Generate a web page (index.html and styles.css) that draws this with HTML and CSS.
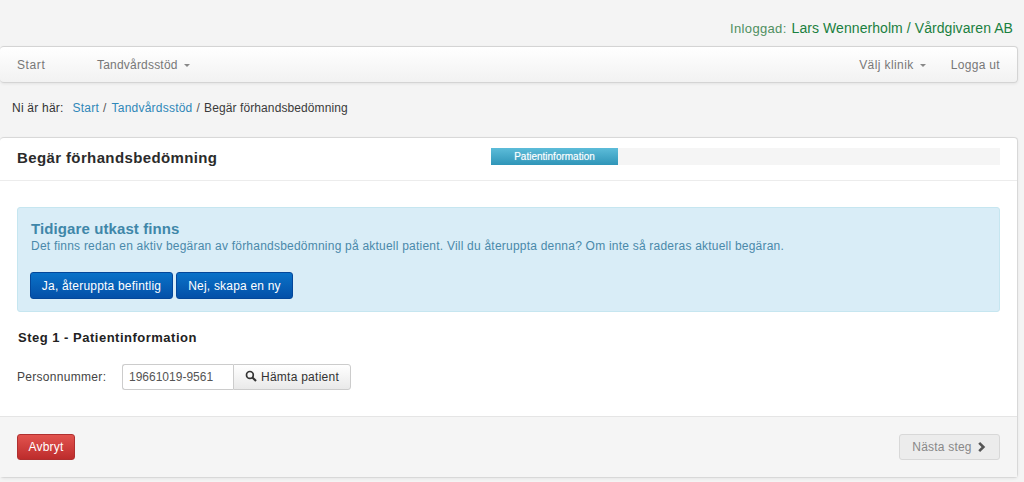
FILE: index.html
```html
<!DOCTYPE html>
<html lang="sv">
<head>
<meta charset="utf-8">
<title>Begär förhandsbedömning</title>
<link rel="stylesheet" href="styles.css">
</head>
<body>
<div class="page">
  <div class="user"><span class="user-label">Inloggad:</span> <span class="user-name">Lars Wennerholm / Vårdgivaren AB</span></div>
  <nav class="navbar">
    <div class="nav-group">
      <a class="nav-start">Start</a>
      <a class="nav-item">Tandvårdsstöd<span class="caret"></span></a>
    </div>
    <div class="nav-group">
      <a class="nav-clinic">Välj klinik<span class="caret"></span></a>
      <a class="nav-logout">Logga ut</a>
    </div>
  </nav>
  <div class="crumbs"><span class="crumb-label">Ni är här:</span><a>Start</a><span class="sep">/</span><a>Tandvårdsstöd</a><span class="sep">/</span><span class="crumb-current">Begär förhandsbedömning</span></div>
  <main class="card">
    <header class="card-head">
      <h1>Begär förhandsbedömning</h1>
      <div class="progress"><div class="progress-bar">Patientinformation</div></div>
    </header>
    <section class="card-body">
      <div class="alert">
        <h2>Tidigare utkast finns</h2>
        <p>Det finns redan en aktiv begäran av förhandsbedömning på aktuell patient. Vill du återuppta denna? Om inte så raderas aktuell begäran.</p>
        <div class="alert-actions">
          <button class="btn btn-blue btn-resume">Ja, återuppta befintlig</button>
          <button class="btn btn-blue btn-new">Nej, skapa en ny</button>
        </div>
      </div>
      <h3>Steg 1 - Patientinformation</h3>
      <div class="field">
        <label>Personnummer:</label>
        <div class="input-group">
          <span class="input">19661019-9561</span>
          <button class="btn-fetch">
            <svg class="icon-search" viewBox="0 0 12 12" width="12" height="12"><circle cx="4.9" cy="4.9" r="3.4" fill="none" stroke="#333" stroke-width="1.7"/><path d="M7.4 7.4 11 11" stroke="#333" stroke-width="2.1" fill="none"/></svg>Hämta patient
          </button>
        </div>
      </div>
    </section>
    <footer class="card-foot">
      <button class="btn btn-red">Avbryt</button>
      <button class="btn btn-next">Nästa steg<svg class="icon-next" viewBox="0 0 10 12" width="10" height="12"><path d="M2.2 1.8 6.4 6 2.2 10.2" fill="none" stroke="#555" stroke-width="2.6"/></svg></button>
    </footer>
  </main>
</div>
</body>
</html>
```
FILE: styles.css
```css
* { box-sizing: border-box; }
html, body { margin: 0; padding: 0; height: 482px; overflow: hidden; }
body {
  background: #f4f4f4;
  font-family: "Liberation Sans", Arial, sans-serif;
  font-size: 12px;
  color: #333;
}
.page { width: 1018px; }
.user {
  height: 46px;
  padding: 20px 5px 0 0;
  text-align: right;
  font-size: 14px;
  line-height: 16px;
  color: #1a8040;
}
.user-name { letter-spacing: .07px; }
.user-label { color: #4f8f5f; font-size: 13px; letter-spacing: .35px; margin-right: 1px; }
.navbar {
  height: 37px;
  display: flex;
  justify-content: space-between;
  align-items: center;
  background: linear-gradient(#ffffff, #f2f2f2);
  border: 1px solid #d4d4d4;
  border-left: 0;
  border-radius: 4px;
  box-shadow: 0 1px 3px rgba(0,0,0,.07);
  color: #777;
  letter-spacing: .2px;
}
.nav-group { display: flex; align-items: center; }
.nav-start { margin-left: 17px; width: 80px; letter-spacing: .6px; }
.nav-clinic { margin-right: 25px; letter-spacing: .4px; }
.nav-logout { margin-right: 17px; letter-spacing: .33px; }
.caret {
  display: inline-block;
  margin-left: 6px;
  vertical-align: middle;
  border-top: 3px solid #888;
  border-left: 3px solid transparent;
  border-right: 3px solid transparent;
}
.crumbs {
  height: 54px;
  padding: 17px 0 0 12px;
  line-height: 16px;
  letter-spacing: .22px;
  color: #333;
}
.crumbs a { color: #2f87b8; }
.crumb-label { margin-right: 9px; }
.crumb-current { letter-spacing: .1px; color: #3a3a3a; }
.sep { margin: 0 4px; color: #555; }
.sep + a { margin-left: 1px; }
.card {
  height: 341px;
  background: #fff;
  border: 1px solid #d8d8d8;
  border-left: 0;
  border-radius: 4px;
  box-shadow: 0 1px 3px rgba(0,0,0,.06);
  display: flex;
  flex-direction: column;
}
.card-head {
  height: 43px;
  flex: none;
  display: flex;
  align-items: flex-start;
  justify-content: space-between;
  padding: 10px 17px 0 17px;
  border-bottom: 1px solid #ececec;
}
h1 {
  margin: 0;
  font-size: 15px;
  line-height: 20px;
  font-weight: bold;
  color: #2b2b2b;
  letter-spacing: .38px;
}
.progress {
  width: 509px;
  height: 17px;
  background: #f5f5f5;
}
.progress-bar {
  width: 127px;
  height: 17px;
  background: linear-gradient(#5cbcd9, #2f95b8);
  color: #fff;
  font-size: 10px;
  font-weight: normal;
  line-height: 17px;
  text-align: center;
  text-shadow: 0 0 1px rgba(255,255,255,.5);
}
.card-body { flex: 1; padding: 26px 17px 0 17px; }
.alert {
  height: 105px;
  background: #d9edf7;
  border: 1px solid #c6e6f0;
  border-radius: 3px;
  padding: 11px 12px 0 12px;
  color: #4a89aa;
}
h2 {
  margin: 0;
  font-size: 15px;
  line-height: 19px;
  font-weight: bold;
  color: #3f87a9;
  padding-left: 1px;
  letter-spacing: .1px;
}
.alert p { margin: 0; padding-left: 1px; line-height: 16px; letter-spacing: .22px; }
.alert-actions { margin-top: 18px; display: flex; gap: 3px; }
.btn {
  font-family: inherit;
  font-size: 12px;
  border-radius: 3px;
  height: 27px;
  padding: 0;
  letter-spacing: .2px;
}
.btn-blue {
  background: linear-gradient(#0a72c8, #0450a8);
  border: 1px solid #04479a;
  color: #fff;
}
.btn-resume { width: 143px; }
.btn-new { width: 117px; }
h3 {
  margin: 18px 0 0 1px;
  font-size: 13px;
  line-height: 16px;
  font-weight: bold;
  color: #222;
  letter-spacing: .5px;
}
.field { display: flex; align-items: center; margin-top: 18px; }
.field label { width: 105px; color: #444; letter-spacing: .3px; }
.input-group { display: flex; height: 26px; }
.input {
  width: 111px;
  background: #fff;
  border: 1px solid #ccc;
  border-right: 0;
  border-radius: 3px 0 0 3px;
  padding-left: 6px;
  line-height: 24px;
  color: #555;
}
.btn-fetch {
  width: 118px;
  font-family: inherit;
  font-size: 12px;
  letter-spacing: .25px;
  color: #333;
  padding: 0;
  background: linear-gradient(#ffffff, #e9e9e9);
  border: 1px solid #ccc;
  border-radius: 0 3px 3px 0;
}
.icon-search { vertical-align: -1px; margin-right: 4px; }
.card-foot {
  height: 61px;
  flex: none;
  background: #f5f5f5;
  border-top: 1px solid #e5e5e5;
  display: flex;
  justify-content: space-between;
  align-items: flex-start;
  padding: 17px 17px 0 17px;
}
.btn-red {
  width: 58px;
  height: 26px;
  background: linear-gradient(#e2534e, #bd2c2c);
  border: 1px solid #b03030;
  color: #fff;
}
.btn-next {
  width: 101px;
  height: 26px;
  background: #ececec;
  border: 1px solid #d8d8d8;
  color: #888;
}
.icon-next { vertical-align: -2px; margin-left: 5px; }
```
